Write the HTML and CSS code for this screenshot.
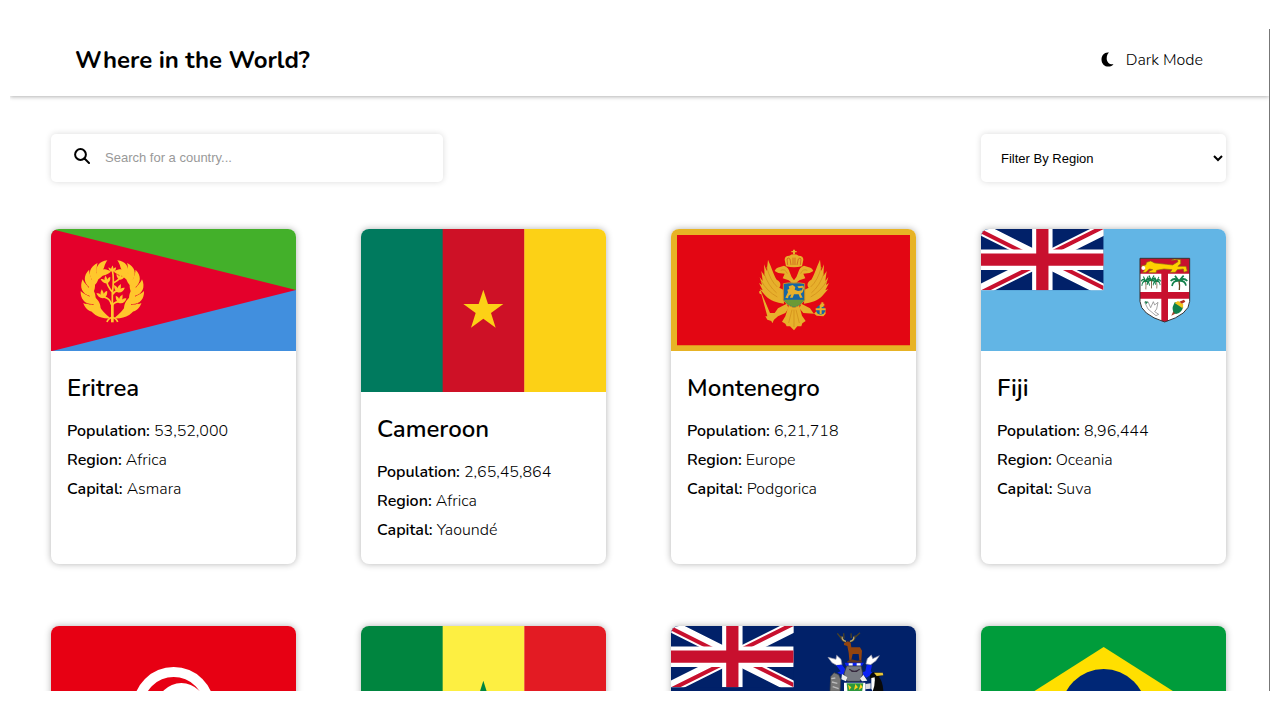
FILE: index.html
```html
<!DOCTYPE html>
<html lang="en">
<head>
<meta charset="utf-8">
<meta name="viewport" content="width=device-width, initial-scale=1">
<title>Where in the World?</title>
<link rel="stylesheet" href="styles.css">
</head>
<body>
<svg class="defs" aria-hidden="true">
  <defs>
    <clipPath id="uj-tri"><path d="M30 15h30v15zM30 15v15H0zM30 15H0V0zM30 15V0h30z"/></clipPath>
    <symbol id="union" viewBox="0 0 60 30" preserveAspectRatio="none">
      <rect width="60" height="30" fill="#012169"/>
      <path d="M0 0L60 30M60 0L0 30" stroke="#fff" stroke-width="6"/>
      <path d="M0 0L60 30M60 0L0 30" clip-path="url(#uj-tri)" stroke="#c8102e" stroke-width="4"/>
      <path d="M30 0V30M0 15H60" stroke="#fff" stroke-width="10"/>
      <path d="M30 0V30M0 15H60" stroke="#c8102e" stroke-width="6"/>
    </symbol>
    <g id="leaf"><path d="M-64 24C-90 20-100 0-92-24C-84-10-74-6-71 0C-70-8-64-14-55-20C-50 0-54 14-64 24Z"/></g>
    <g id="wreath">
      <use href="#leaf" transform="rotate(-38)"/><use href="#leaf" transform="rotate(-16)"/><use href="#leaf" transform="rotate(6)"/>
      <use href="#leaf" transform="rotate(27) scale(.98)"/><use href="#leaf" transform="rotate(47) scale(.98)"/><use href="#leaf" transform="rotate(66) scale(.96)"/>
      <path d="M-6 84C-36 86-64 74-78 38C-60 50-54 56-46 60C-48 50-46 44-44 38C-36 58-20 70-6 84Z"/>
    </g>
    <g id="bud"><path d="M0 14C-12 12-18 2-20-8C-12-6-8-4-6 0C-6-8-2-12 2-18C4-10 6-6 5-1C10-6 14-8 19-8C18 4 12 13 0 14Z"/></g>
    <g id="wing">
      <path d="M-30 14C-52 12-72 4-84-8L-103-30L-94-26L-105-48L-96-42L-103-66L-94-54L-98-84L-88-68L-90-104L-82-84L-78-118C-66-92-62-74-52-58C-40-52-38-42-44-34L-32-28Z"/>
      <path d="M-90-78Q-78-40-52-18M-82-96Q-72-56-50-36M-98-54Q-82-24-50-6" fill="none" stroke="#cf8a18" stroke-width="2"/>
    </g>
    <g id="palm" fill="none" stroke="#12804b" stroke-width="5"><path d="M0 0Q-14-12-25 0M0 0Q-18-2-21 15M0 0Q14-12 25 0M0 0Q18-2 21 14M0 0Q-8-10-12-16M0 0Q8-10 14-16"/><path d="M0 0Q3 14 1 27" stroke="#654722" stroke-width="4"/></g>
  </defs>
</svg>

<div class="page">
  <header class="header">
    <h1 class="brand">Where in the World?</h1>
    <button class="mode" type="button">
      <svg class="moon" viewBox="0 0 13 15" aria-hidden="true"><path d="M8 .6C3.800-.2.5 3 .5 7.400C.5 11.600 3.600 14.600 7.400 14.600C9.600 14.600 11.400 13.700 12.500 12.200C8.500 12.700 5.700 10 5.700 6.400C5.700 3.800 6.700 1.800 8 .6Z"/></svg>
      <span>Dark Mode</span>
    </button>
  </header>

  <main class="main">
    <form class="filters">
      <div class="search">
        <svg class="glass" viewBox="0 0 16 16" aria-hidden="true"><circle cx="6.5" cy="6.5" r="5.4"/><path d="M10.5 10.5L15 15"/></svg>
        <input class="search-input" type="search" placeholder="Search for a country..." aria-label="Search for a country">
      </div>
      <select class="region" aria-label="Filter By Region">
        <option>Filter By Region</option><option>Africa</option><option>Americas</option><option>Asia</option><option>Europe</option><option>Oceania</option>
      </select>
    </form>

    <section class="cards">
      <article class="card">
        <svg class="flag" viewBox="34 28 735 367" role="img" aria-label="Flag of Eritrea">
          <path fill="#43b02a" d="M34 28h735v184H34z"/><path fill="#418fde" d="M34 211h735v184H34z"/><path fill="#e4002b" d="M34 28L769 211L34 395z"/>
          <g fill="#ffc72c">
            <g transform="translate(218 212)"><use href="#wreath"/><use href="#wreath" transform="scale(-1 1)"/></g>
            <use href="#bud" transform="translate(218 148) scale(.6)"/><use href="#bud" transform="translate(199 181) rotate(-12) scale(.75)"/>
            <use href="#bud" transform="translate(242 171) rotate(12) scale(.65)"/><use href="#bud" transform="translate(188 224) rotate(-12) scale(.85)"/>
            <use href="#bud" transform="translate(238 207) rotate(15) scale(.85)"/><use href="#bud" transform="translate(243 239) rotate(15) scale(.85)"/>
          </g>
          <path d="M218 306V220Q224 180 218 150M217 216Q204 200 202 188M215 255Q212 236 192 232M217 260Q220 248 238 246M219 224Q224 214 236 212M221 190Q234 184 240 176M202 307Q204 298 218 292Q232 298 234 307" fill="none" stroke="#ffc72c" stroke-width="5"/>
          <path d="M218 308V250" stroke="#ffc72c" stroke-width="8"/>
        </svg>
        <div class="info"><h2 class="name">Eritrea</h2><p class="fact"><b>Population:</b> 53,52,000</p><p class="fact"><b>Region:</b> Africa</p><p class="fact"><b>Capital:</b> Asmara</p></div>
      </article>

      <article class="card">
        <svg class="flag" viewBox="0 0 735 490" role="img" aria-label="Flag of Cameroon">
          <path fill="#007a5e" d="M0 0h246v490H0z"/><path fill="#ce1126" d="M245 0h246v490H245z"/><path fill="#fcd116" d="M490 0h245v490H490z"/>
          <path fill="#fcd116" d="M367 182l14 43h46l-37 27l14 44l-37-27l-37 27l14-44l-37-27h46z"/>
        </svg>
        <div class="info"><h2 class="name">Cameroon</h2><p class="fact"><b>Population:</b> 2,65,45,864</p><p class="fact"><b>Region:</b> Africa</p><p class="fact"><b>Capital:</b> Yaoundé</p></div>
      </article>

      <article class="card">
        <svg class="flag" viewBox="33 28 735 367" role="img" aria-label="Flag of Montenegro">
          <path fill="#e7b325" d="M33 28h735v367H33z"/><path fill="#e30613" d="M51 46h699v331H51z"/>
          <g fill="#e7b02c" transform="translate(402 238)"><use href="#wing"/><use href="#wing" transform="scale(-1 1)"/></g>
          <g fill="#e7b02c">
            <path d="M396 194Q394 186 386 182L368 176L374 162L355 160L344 154Q348 144 360 142L372 138Q386 142 390 160Q394 174 402 182Q410 174 414 160Q418 142 432 138L444 142Q456 144 460 154L449 160L430 162L436 176L418 182Q410 186 408 194Z"/>
            <path d="M378 140L374 120Q374 108 388 108Q394 104 402 104Q410 104 416 108Q430 108 430 120L426 140Q402 146 378 140Z"/>
            <path d="M399 104V98H394V94H399V90H405V94H410V98H405V104Z"/>
            <path d="M380 252L354 266L344 280L330 280L308 228L302 212L297 216L299 222L304 224L322 290L316 290L322 300L334 304L337 311L342 300L354 290L376 280L386 266Z"/>
            <path d="M424 252L450 266L460 280L470 288L490 290L497 282L496 270L478 264L462 282L430 280L418 266Z"/>
            <path d="M386 258L376 290L366 306L376 312L380 320L390 320L402 332L412 320L424 320L427 311L437 304L426 288L418 258Z"/>
          </g>
          <path d="M383 136L381 118Q384 112 390 118L393 136M399 136V114M405 136V114M411 136L415 118Q421 112 423 118L421 136" fill="none" stroke="#c8501a" stroke-width="2"/>
          <path d="M386 310L396 270M402 322V270M418 310L408 270M362 152Q376 146 382 162M442 152Q428 146 422 162" fill="none" stroke="#cf8a18" stroke-width="2"/>
          <path d="M370 192Q386 188 402 190Q418 188 434 192V240Q426 256 402 264Q378 256 370 240Z" fill="#1666a5" stroke="#c79025" stroke-width="3"/>
          <path d="M372 240H432Q424 255 402 262Q380 255 372 240Z" fill="#6a9a36"/>
          <path d="M376 234L384 218L382 210L388 208L386 200L398 196L406 202L404 210L414 214L426 212L428 204L416 206L412 200L430 198L432 206L428 218L422 222L428 234H420L416 224L402 224L398 234H390L394 224L386 228L384 236Z" fill="#e7b02c"/>
          <circle cx="482" cy="271" r="14" fill="#1666a5"/><path d="M467 269H497M482 284V256M487 248V262M481 255H493" stroke="#e7b02c" stroke-width="6"/>
        </svg>
        <div class="info"><h2 class="name">Montenegro</h2><p class="fact"><b>Population:</b> 6,21,718</p><p class="fact"><b>Region:</b> Europe</p><p class="fact"><b>Capital:</b> Podgorica</p></div>
      </article>

      <article class="card">
        <svg class="flag" viewBox="31 28 735 367" role="img" aria-label="Flag of Fiji">
          <path fill="#62b5e5" d="M31 28h735v367H31z"/><use href="#union" x="31" y="28" width="368" height="184"/>
          <path d="M508 116H657V245Q656 284 582 307Q509 284 508 245Z" fill="#fff"/>
          <path d="M508 116H657V162H508ZM572 162H592V304L582 307L572 304ZM508 217H657V237H508Z" fill="#c8102e"/>
          <path d="M513 138L525 136L528 128L540 124L552 130L588 134L606 136L622 126L620 120L602 122L612 118L630 120L630 132L622 140L646 140L650 154L640 158L638 148L620 150L614 158H598L604 150L580 148L558 152L556 159H534L536 154L546 150L536 148L526 158L516 158L522 150Z" fill="#ffd100" stroke="#8b6914" stroke-width="2"/>
          <circle cx="518" cy="145" r="6" fill="#fff"/>
          <use href="#palm" transform="translate(625 184)"/><use href="#palm" transform="translate(525 185) scale(.55 .9)"/><use href="#palm" transform="translate(542 182) scale(.6 .9)"/><use href="#palm" transform="translate(558 185) scale(.5 .8)"/>
          <path d="M522 248L532 246L540 264L548 246L552 256L562 248L558 268L552 276L564 284L556 288L544 278L532 268L526 256Z" fill="#fff" stroke="#777" stroke-width="2"/><path d="M522 244L532 248L526 254Z" fill="#12804b"/>
          <path d="M602 288L612 266L618 254L634 262L618 280Z" fill="#a0402a"/><path d="M612 248Q626 246 638 262Q632 280 616 283Q604 278 606 262Z" fill="#12804b"/><path d="M612 250L622 244L638 254L636 266Z" fill="#f2c319"/><path d="M626 246L640 240L644 246L634 252Z" fill="#b5301e"/>
          <path d="M508 116H657V245Q656 284 582 307Q509 284 508 245Z" fill="none" stroke="#333" stroke-width="3"/>
        </svg>
        <div class="info"><h2 class="name">Fiji</h2><p class="fact"><b>Population:</b> 8,96,444</p><p class="fact"><b>Region:</b> Oceania</p><p class="fact"><b>Capital:</b> Suva</p></div>
      </article>

      <article class="card">
        <svg class="flag" viewBox="34 48 735 490" role="img" aria-label="Flag of Tunisia">
          <path fill="#e70013" d="M34 48h735v490H34z"/><circle cx="402" cy="293" r="122" fill="#fff"/><circle cx="402" cy="293" r="92" fill="#e70013"/><circle cx="425" cy="293" r="74" fill="#fff"/>
          <path fill="#e70013" d="M378 293l76-26l-46 64v-76l46 64z"/>
        </svg>
      </article>

      <article class="card">
        <svg class="flag" viewBox="33 48 735 490" role="img" aria-label="Flag of Senegal">
          <path fill="#00853f" d="M33 48h246v490H33z"/><path fill="#fdef42" d="M278 48h246v490H278z"/><path fill="#e31b23" d="M523 48h246v490H523z"/>
          <path fill="#00853f" d="M400 212l18 57h60l-48 36l18 57l-48-35l-48 35l18-57l-48-36h60z"/>
        </svg>
      </article>

      <article class="card">
        <svg class="flag" viewBox="33 48 735 367" role="img" aria-label="Flag of South Georgia">
          <path fill="#012169" d="M33 48h735v367H33z"/><use href="#union" x="33" y="48" width="368" height="184"/>
          <path d="M560 98Q540 92 543 78M568 96Q588 92 585 76M548 90L532 70M552 86L551 70M579 88L600 68M574 84L573 70" fill="none" stroke="#4c4225" stroke-width="4"/>
          <path d="M558 94Q544 90 547 80M570 94Q584 90 581 80" fill="none" stroke="#b9a66e" stroke-width="4"/>
          <path d="M552 100L563 94L572 98L574 112L600 112L606 122L604 150H598L596 132L578 132L574 150H568L566 128L562 108L552 105Z" fill="#92440f"/>
          <path d="M562 154L574 148L592 152L604 150L606 158H562Z" fill="#63361c"/>
          <path d="M504 142L528 148L530 136L543 148L546 164L530 166L516 158ZM658 137L638 146L634 135L622 146L618 162L632 164L648 152Z" fill="#fff" stroke="#99a" stroke-width="2"/>
          <path d="M528 166L546 164L560 184L548 195L532 188L542 184ZM620 164L636 166L632 184L638 190L620 203L602 188L616 184ZM554 158H612L606 168H558Z" fill="#0a22f4"/>
          <path d="M566 160H578V167H566ZM590 160H602V167H590Z" fill="#fff"/>
          <path d="M560 168H604L608 192L600 214H562L552 192Z" fill="#777b83" stroke="#333" stroke-width="2"/><path d="M568 178Q583 190 599 178M574 184H592" fill="none" stroke="#35283d" stroke-width="4"/>
          <path d="M546 192L562 202L558 214L544 208ZM610 194L600 206L606 214L622 212Z" fill="#eee"/>
          <path d="M510 244L512 200L522 188L536 194L542 208L540 244Z" fill="#777" stroke="#444" stroke-width="2"/><path d="M514 206L526 204M516 216L532 220M518 230L536 236" stroke="#bbb" stroke-width="4"/>
          <path d="M552 218H616V260Q610 290 584 300Q556 290 552 260Z" fill="#fff"/><path d="M560 220H610L604 260H564Z" fill="#2d983b"/>
          <path d="M564 224L574 232L568 240ZM586 222L594 232L582 240ZM602 222L608 232L596 240Z" fill="#ffd21c"/>
          <path d="M630 204Q628 190 642 187L666 188L668 196L656 200Q672 216 670 260H638L640 218Z" fill="#090909"/><path d="M642 188L668 188L670 196L650 198Z" fill="#e8c535"/><path d="M634 204L644 202Q646 224 638 244L634 236Z" fill="#fff"/><path d="M616 222L632 220V236L616 238Z" fill="#ddd"/>
        </svg>
      </article>

      <article class="card">
        <svg class="flag" viewBox="31 48 735 515" role="img" aria-label="Flag of Brazil">
          <path fill="#009c3b" d="M31 48h735v515H31z"/><path fill="#ffdf00" d="M399 111L704 305L399 499L94 305z"/><circle cx="399" cy="305" r="128" fill="#002776"/>
          <path d="M276 282Q410 270 516 354" fill="none" stroke="#fff" stroke-width="18"/>
        </svg>
      </article>
    </section>
  </main>
</div>
</body>
</html>
```
FILE: styles.css
```css
* { box-sizing: border-box; }

body {
  margin: 0;
  padding: 29px 10px;
  background: #fff;
  color: #000;
  font-family: Nunito, Lato, sans-serif;
  font-size: 16px;
  font-weight: 300;
}

.defs { position: absolute; width: 0; height: 0; }

.page {
  height: calc(100vh - 58px);
  overflow: hidden;
  border-right: 1px solid #777;
}

.header {
  display: flex;
  align-items: center;
  justify-content: space-between;
  height: 67px;
  padding: 0 66px 6px 65px;
  box-shadow: 0 1px 4px rgba(0, 0, 0, .3);
}

.brand { margin: 0; font-size: 24px; line-height: 32px; font-weight: 700; }

.mode {
  display: flex;
  align-items: center;
  gap: 12px;
  padding: 0;
  border: 0;
  background: none;
  color: inherit;
  font: inherit;
  cursor: pointer;
}

.moon { width: 13px; height: 15px; }

.main { padding: 38px 43px 40px 41px; }

.filters {
  display: flex;
  justify-content: space-between;
  margin-bottom: 47px;
}

.search {
  display: flex;
  align-items: center;
  gap: 15px;
  width: 392px;
  height: 48px;
  padding: 0 24px 2px 23px;
  border-radius: 5px;
  box-shadow: 0 0 6px rgba(0, 0, 0, .15);
}

.glass {
  width: 16px;
  height: 16px;
  margin-bottom: 2px;
  fill: none;
  stroke: #000;
  stroke-width: 2;
  stroke-linecap: round;
}

.search-input {
  flex: 1;
  min-width: 0;
  padding: 0;
  border: 0;
  outline: 0;
  background: none;
  font: 13px "Liberation Sans", Arial, sans-serif;
}

.search-input::placeholder { color: #999; }

.region {
  width: 245px;
  height: 48px;
  padding: 0 0 0 16px;
  border: 0;
  border-radius: 5px;
  background: #fff;
  color: #000;
  box-shadow: 0 0 6px rgba(0, 0, 0, .15);
  font: 13px "Liberation Sans", Arial, sans-serif;
}

.cards {
  display: grid;
  grid-template-columns: repeat(4, 1fr);
  gap: 62px 65px;
}

.card {
  overflow: hidden;
  border-radius: 8px;
  background: #fff;
  box-shadow: 0 0 7px rgba(0, 0, 0, .3);
}

.flag { display: block; width: 100%; height: auto; }

.info { padding: 21px 16px 19px; }

.name { margin: 0 0 13px; font-size: 24px; line-height: 32px; font-weight: 600; }

.fact { margin: 0; line-height: 29px; }

.fact b { font-weight: 600; }
```
